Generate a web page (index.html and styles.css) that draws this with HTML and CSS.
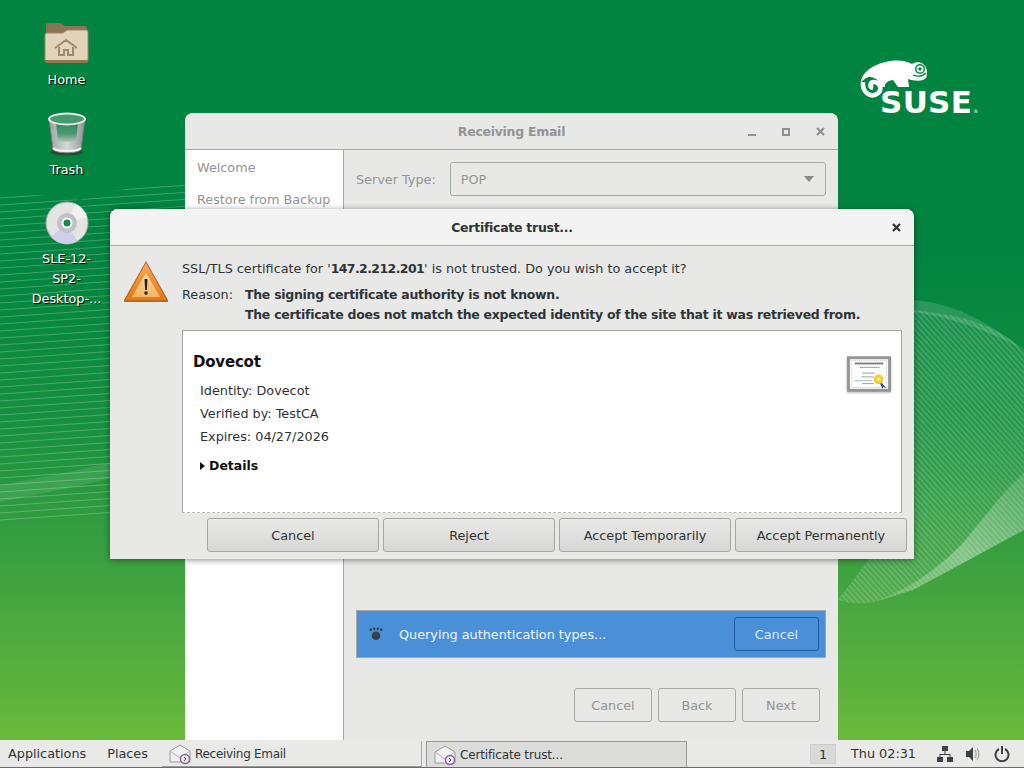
FILE: index.html
```html
<!DOCTYPE html>
<html lang="en">
<head>
<meta charset="utf-8">
<title>Certificate trust</title>
<link rel="stylesheet" href="styles.css">
</head>
<body>
<div class="desktop">
  <svg class="waves" width="1024" height="740" viewBox="0 0 1024 740" fill="none">
    <defs>
      <pattern id="stripes-right" width="4" height="4" patternUnits="userSpaceOnUse" patternTransform="rotate(48)">
        <rect width="4" height="1.300" fill="#fff" fill-opacity=".2"/>
      </pattern>
      <linearGradient id="band-right" x1="1" y1="0" x2="0" y2="1">
        <stop offset="0" stop-color="#fff" stop-opacity=".12"/>
        <stop offset=".5" stop-color="#fff" stop-opacity=".32"/>
        <stop offset="1" stop-color="#fff" stop-opacity=".1"/>
      </linearGradient>
      <clipPath id="left-shape"><path d="M0 195C30 193 60 197 80 200C110 190 150 184 190 182V510L0 525Z"/></clipPath>
    </defs>
    <g clip-path="url(#left-shape)">
      <path class="stripe-lines" d="M0 198l190-13M0 205l190-13M0 212l190-13M0 219l190-13M0 226l190-13M0 233l190-13M0 240l190-13M0 247l190-13M0 254l190-13M0 261l190-13M0 268l190-13M0 275l190-13M0 282l190-13M0 289l190-13M0 296l190-13M0 303l190-13M0 310l190-13M0 317l190-13M0 324l190-13M0 331l190-13M0 338l190-13M0 345l190-13M0 352l190-13M0 359l190-13M0 366l190-13M0 373l190-13M0 380l190-13M0 387l190-13M0 394l190-13M0 401l190-13M0 408l190-13M0 415l190-13M0 422l190-13M0 429l190-13M0 436l190-13M0 443l190-13M0 450l190-13M0 457l190-13M0 464l190-13M0 471l190-13M0 478l190-13M0 485l190-13M0 492l190-13M0 499l190-13M0 506l190-13M0 513l190-13M0 520l190-13"/>
    </g>
    <path d="M0 485C40 478 80 470 130 458V474C80 486 40 494 0 502Z" fill="#fff" fill-opacity=".1"/>
    <path d="M838 600C860 608 885 600 913 590L963 563L1024 530V350C1000 330 985 325 963 318C945 314 930 312 914 310V500Z" fill="#fff" fill-opacity=".07"/>
    <path d="M838 600C860 608 885 600 913 590L963 563L1024 530V350C1000 330 985 325 963 318C945 314 930 312 914 310V500Z" fill="url(#stripes-right)"/>
    <path d="M914 300C945 303 975 312 1024 350C985 328 950 318 914 312Z" fill="#fff" fill-opacity=".14"/>
    <path d="M863 605C885 600 900 592 913 590L963 563L1024 530V473C1005 490 990 510 963 543C935 572 900 595 863 605Z" fill="url(#band-right)"/>
  </svg>

  <div class="desk-icon desk-home">
    <svg width="46" height="42" viewBox="0 0 46 42">
      <path d="M2 3a2 2 0 0 1 2-2h13l4 3h20a2 2 0 0 1 2 2v10H2z" fill="#8b7356"/>
      <path d="M1 13a2 2 0 0 1 2-2h16l4-3h19a2 2 0 0 1 2 2v28a2 2 0 0 1-2 2H3a2 2 0 0 1-2-2z" fill="#e4d3bb" stroke="#a08a6c"/>
      <path d="M1 38h43v1a2 2 0 0 1-2 2H3a2 2 0 0 1-2-2z" fill="#8d7757"/>
      <path d="M11 26l11-8 11 8M15 25v8h5v-5h4v5h5v-8" fill="none" stroke="#a08a6c" stroke-width="2"/>
    </svg>
    <span class="desk-label">Home</span>
  </div>
  <div class="desk-icon desk-trash">
    <svg width="40" height="44" viewBox="0 0 40 44">
      <defs>
        <linearGradient id="bin" x1="0" y1="0" x2="1" y2="0"><stop offset="0" stop-color="#9ea3a0"/><stop offset=".5" stop-color="#d6dad7"/><stop offset="1" stop-color="#8f9491"/></linearGradient>
        <linearGradient id="bin-in" x1="0" y1="0" x2="0" y2="1"><stop offset="0" stop-color="#2f8a5c"/><stop offset=".6" stop-color="#4f9a74"/><stop offset="1" stop-color="#b9c4be"/></linearGradient>
      </defs>
      <ellipse cx="20" cy="40" rx="16" ry="3.500" fill="#274a36"/>
      <path d="M2 6l4 31c1 5 27 5 28 0l4-31z" fill="url(#bin)" stroke="#7d827f"/>
      <path d="M9 11h22l-2 19H11z" fill="url(#bin-in)"/>
      <path d="M6 36c4 4 24 4 28 0" fill="none" stroke="#f2f2f2" stroke-width="2"/>
      <ellipse cx="20" cy="7" rx="18" ry="5.500" fill="#459a70" stroke="#e4e6e4" stroke-width="2"/>
    </svg>
    <span class="desk-label">Trash</span>
  </div>
  <div class="desk-icon desk-disc">
    <svg width="44" height="44" viewBox="0 0 44 44">
      <circle cx="22" cy="22" r="21" fill="#e4e4e2" stroke="#a8a8aa"/>
      <path d="M22 22L6 36A21 21 0 0 0 32 40z" fill="#cfcfe6"/>
      <path d="M22 22L42 16A21 21 0 0 0 30 3z" fill="#f1f1ef"/>
      <circle cx="22" cy="22" r="10" fill="#c0c0cc"/>
      <circle cx="22" cy="22" r="5.500" fill="#fff"/>
      <circle cx="22" cy="22" r="3.500" fill="#1a8a4c"/>
    </svg>
    <span class="desk-label">SLE-12-<br>SP2-<br>Desktop-...</span>
  </div>

  <svg class="suse-logo" width="70" height="44" viewBox="0 0 70 44" aria-hidden="true">
    <path d="M1 24C2 12 20 2.500 37 2.500C43 2.500 48 4 52 6C55 4 60 3.500 63 6C67 9 68 15 66 20C62 24 54 23 48 21L49 29H38L33 22C28 22 24 26 25 29H21C20 22 12 17 6 20L1 24Z" fill="#fff"/>
    <path d="M3 24C2 34 10 40 17 36C23 32 20 24 14 24C10 24 9 29 13 30" fill="none" stroke="#fff" stroke-width="4.500"/>
    <circle cx="60" cy="11" r="5" fill="#00843f"/><circle cx="60" cy="11" r="3.500" fill="#fff"/><circle cx="60" cy="11" r="1.700" fill="#00843f"/>
    <path d="M53 17C58 19 63 18 66 15" fill="none" stroke="#00843f" stroke-width="1.300"/>
  </svg>
  <div class="suse-word">SUSE<span class="suse-mark">®</span></div>

  <section class="win win-back">
    <header class="titlebar back-title">
      <span class="title-text">Receiving Email</span>
      <span class="wm-btns">
        <i class="wm-min"></i><i class="wm-max"></i>
        <svg width="9" height="9" viewBox="0 0 9 9"><path d="M1 1l7 7M8 1L1 8" stroke="#8f8f8f" stroke-width="2.200"/></svg>
      </span>
    </header>
    <div class="back-body">
      <nav class="side">
        <div class="side-item">Welcome</div>
        <div class="side-item">Restore from Backup</div>
      </nav>
      <div class="back-main">
        <div class="server-row">
          <span class="muted-label">Server Type:</span>
          <div class="select"><span>POP</span><i class="caret"></i></div>
        </div>
        <div class="spacer"></div>
        <div class="infobar">
          <svg width="14" height="14" viewBox="0 0 16 16"><circle cx="8" cy="10" r="5" fill="#3a3f46"/><circle cx="2" cy="3" r="1.500" fill="#3a3f46"/><circle cx="6" cy="2" r="1.500" fill="#3a3f46"/><circle cx="10" cy="2" r="1.500" fill="#3a3f46"/><circle cx="14" cy="3" r="1.500" fill="#3a3f46"/></svg>
          <span class="info-text">Querying authentication types...</span>
          <button class="info-btn">Cancel</button>
        </div>
        <div class="back-actions">
          <button class="btn-dim">Cancel</button>
          <button class="btn-dim">Back</button>
          <button class="btn-dim">Next</button>
        </div>
      </div>
    </div>
  </section>

  <section class="win win-front">
    <header class="titlebar front-title">
      <span class="title-text">Certificate trust...</span>
      <svg class="front-close" width="9" height="9" viewBox="0 0 9 9"><path d="M1 1l7 7M8 1L1 8" stroke="#2e3436" stroke-width="2.200"/></svg>
    </header>
    <div class="front-body">
      <div class="msg-row">
        <svg class="warn" width="46" height="46" viewBox="0 0 46 46">
          <defs><linearGradient id="wg" x1="0" y1="0" x2="0" y2="1"><stop offset="0" stop-color="#f7a95a"/><stop offset="1" stop-color="#e8780e"/></linearGradient>
          <linearGradient id="wi" x1="0" y1="0" x2="0" y2="1"><stop offset="0" stop-color="#fbd9a8"/><stop offset="1" stop-color="#f7b562"/></linearGradient></defs>
          <path d="M23 2L45 41c.5 1.500 0 2-1.500 2h-41C1 43 .5 42.500 1 41z" fill="#b86a22"/>
          <path d="M23 4L43.500 41h-41z" fill="url(#wg)"/>
          <path d="M23 14L37 38H9z" fill="url(#wi)"/>
          <path d="M21.500 20h3l-.7 11h-1.600z" fill="#222"/><circle cx="23" cy="34" r="1.700" fill="#222"/>
        </svg>
        <div class="msg-text">
          <p class="msg-line">SSL/TLS certificate for '<b class="strong ip">147.2.212.201</b>' is not trusted. Do you wish to accept it?</p>
          <div class="reason">
            <span class="reason-label">Reason:</span>
            <b class="strong">The signing certificate authority is not known.<br>The certificate does not match the expected identity of the site that it was retrieved from.</b>
          </div>
        </div>
      </div>
      <div class="cert-box">
        <div class="cert-info">
          <h2 class="cert-name">Dovecot</h2>
          <p class="cert-field">Identity: Dovecot</p>
          <p class="cert-field">Verified by: TestCA</p>
          <p class="cert-field">Expires: 04/27/2026</p>
          <p class="details"><i class="arrow"></i>Details</p>
        </div>
        <svg class="cert-icon" width="44" height="37" viewBox="0 0 46 38">
          <rect x="1.500" y="1.500" width="43" height="34" fill="#fdfdfd" stroke="#949494" stroke-width="3"/>
          <rect x="4.500" y="4.500" width="37" height="28" fill="#fff" stroke="#c6c6c6" stroke-dasharray="1 1"/>
          <path d="M8 7.500h30" stroke="#808080" stroke-width="2"/><path d="M13 11.500h21M16 17.500h13M15 21.500h13M16 28.500h12" stroke="#999"/><path d="M8 25.500h18" stroke="#9db4d8"/>
          <path d="M35 26l6 7-3-1-1 2-3-7z" fill="#2f568f"/>
          <circle cx="33" cy="24" r="5" fill="#f4c92e"/><circle cx="33" cy="24" r="2.200" fill="#fbe68a"/>
        </svg>
      </div>
      <div class="front-actions">
        <button class="btn">Cancel</button>
        <button class="btn">Reject</button>
        <button class="btn">Accept Temporarily</button>
        <button class="btn">Accept Permanently</button>
      </div>
    </div>
  </section>
</div>

<footer class="panel">
  <span class="menu-item">Applications</span>
  <span class="menu-item">Places</span>
  <div class="task task-idle">
    <svg class="mail" width="24" height="22" viewBox="0 0 24 22"><path d="M1 8l10-6 10 6v11H1z" fill="#f1f1f1" stroke="#9a9a9a"/><path d="M1 8l10 7 10-7" fill="none" stroke="#b5b5b5"/><circle cx="16" cy="16" r="4.500" fill="#eee" stroke="#8e5fa0" stroke-width="1.500"/><path d="M15 14l2 2-2 2" fill="none" stroke="#555"/></svg>
    <span class="task-text">Receiving Email</span>
  </div>
  <div class="task task-active">
    <svg class="mail" width="24" height="22" viewBox="0 0 24 22"><path d="M1 8l10-6 10 6v11H1z" fill="#f1f1f1" stroke="#9a9a9a"/><path d="M1 8l10 7 10-7" fill="none" stroke="#b5b5b5"/><circle cx="16" cy="16" r="4.500" fill="#eee" stroke="#8e5fa0" stroke-width="1.500"/><path d="M15 14l2 2-2 2" fill="none" stroke="#555"/></svg>
    <span class="task-text task-text-wide">Certificate trust...</span>
  </div>
  <div class="tray">
    <span class="workspace">1</span>
    <span class="clock">Thu 02:31</span>
    <svg class="tray-net" width="16" height="16" viewBox="0 0 16 16" fill="#3c4145"><rect x="5" y="0" width="6" height="5"/><rect x="0" y="11" width="6" height="5"/><rect x="10" y="11" width="6" height="5"/><path d="M7.500 5h1v3H13.500v3h-1V9h-9v2h-1V8h5z"/></svg>
    <svg class="tray-vol" width="16" height="16" viewBox="0 0 16 16"><path d="M1 5h3l4-4v14l-4-4H1z" fill="#3c4145"/><path d="M10 4c1.500 2 1.500 6 0 8M12 2.500c2.500 3 2.500 8 0 11" fill="none" stroke="#a5a8aa" stroke-width="1.300"/></svg>
    <svg class="tray-power" width="16" height="16" viewBox="0 0 16 16" fill="none" stroke="#3c4145" stroke-width="2"><path d="M5 3a6.500 6.500 0 1 0 6 0"/><path d="M8 0v8"/></svg>
  </div>
</footer>
</body>
</html>
```
FILE: styles.css
```css
* { box-sizing: border-box; }
html, body { margin: 0; height: 100%; }
body {
  width: 1024px;
  height: 768px;
  overflow: hidden;
  display: flex;
  flex-direction: column;
  font-family: "DejaVu Sans", sans-serif;
  font-size: 12.8px;
  color: #2e3436;
}
.desktop {
  position: relative;
  height: 740px;
  background: linear-gradient(180deg, #00843f 0, #00843f 250px, #16903f 420px, #3ea240 570px, #6ab93c 740px);
}
.waves { position: absolute; left: 0; top: 0; }
.stripe-lines { stroke: rgba(255,255,255,.24); stroke-width: 1; }

.desk-icon {
  position: absolute;
  left: 24px;
  width: 85px;
  display: flex;
  flex-direction: column;
  align-items: center;
  color: #fff;
  text-align: center;
  line-height: 20px;
}
.desk-home { top: 22px; }
.desk-trash { top: 112px; }
.desk-disc { top: 201px; }
.desk-label { margin-top: 4px; text-shadow: 1px 1px 1px #000; }
.desk-home .desk-label { margin-top: 6px; }

.suse-logo { position: absolute; left: 860px; top: 58px; }
.suse-word {
  position: absolute;
  left: 880px;
  top: 84px;
  font: 700 31px/36px "DejaVu Sans", sans-serif;
  letter-spacing: .3px;
  color: #fff;
  white-space: nowrap;
}
.suse-mark { font-size: 5px; font-weight: 400; margin-left: 1px; }

.win { position: absolute; display: flex; flex-direction: column; }
.win-back {
  left: 185px;
  top: 113px;
  width: 653px;
  height: 627px;
  background: #e8e8e7;
  border-radius: 8px 8px 0 0;
  color: #949494;
}
.titlebar {
  position: relative;
  flex: none;
  display: flex;
  align-items: center;
  justify-content: center;
  font-size: 12.500px;
  font-weight: 700;
  letter-spacing: -.28px;
  border-bottom: 1px solid #a8a8a6;
}
.strong { font-size: 12.500px; font-weight: 700; letter-spacing: -.28px; }
.ip { letter-spacing: -.6px; }
.back-title { height: 37px; background: #e8e8e7; border-radius: 8px 8px 0 0; }
.wm-btns {
  position: absolute;
  right: 13px;
  top: 14px;
  display: flex;
  align-items: flex-end;
  gap: 26px;
  height: 9px;
}
.wm-min { width: 8px; height: 2px; background: #8f8f8f; }
.wm-max { width: 8px; height: 8px; border: 2px solid #8f8f8f; }
.back-body { flex: 1; display: flex; min-height: 0; }
.side { width: 159px; background: #fff; border-right: 1px solid #a8a8a6; padding-top: 1px; }
.side-item { height: 32px; padding: 8px 12px 0; line-height: 17px; white-space: nowrap; }
.back-main { flex: 1; display: flex; flex-direction: column; padding: 12px 12px 0; min-width: 0; }
.server-row { display: flex; align-items: center; gap: 14px; }
.select {
  flex: 1;
  height: 34px;
  display: flex;
  align-items: center;
  justify-content: space-between;
  padding: 0 11px 0 10px;
  border: 1px solid #aaa;
  border-radius: 3px;
}
.caret { border: 5px solid transparent; border-top: 6px solid #888; border-bottom: 0; }
.spacer { flex: 1; }
.infobar {
  height: 48px;
  display: flex;
  align-items: center;
  background: #4a90d9;
  border: 1px solid #a5a5a5;
  color: #f0f5fb;
  padding: 0 6px 0 12px;
}
.info-text { flex: 1; margin-left: 16px; }
.info-btn {
  width: 85px;
  height: 34px;
  font: inherit;
  color: #dce8f6;
  background: #4a90d9;
  border: 1px solid #1f5c9c;
  border-radius: 3px;
}
.back-actions { display: flex; justify-content: flex-end; gap: 6px; margin: 30px 6px 18px 0; }
.btn-dim {
  width: 78px;
  height: 34px;
  font: inherit;
  color: #939393;
  background: transparent;
  border: 1px solid #a8a8a8;
  border-radius: 3px;
}

.win-front {
  left: 110px;
  top: 209px;
  width: 804px;
  height: 350px;
  background: #e8e8e7;
  border-radius: 8px 8px 0 0;
  box-shadow: 0 1px 6px rgba(0,0,0,.45);
}
.front-title { height: 37px; background: #f3f3f3; border-radius: 8px 8px 0 0; }
.front-close { position: absolute; right: 13px; top: 14px; }
.front-body { flex: 1; display: flex; flex-direction: column; min-height: 0; }
.msg-row { display: flex; height: 84px; padding: 13px 0 0 13px; }
.warn { flex: none; }
.msg-text { margin-left: 13px; }
.msg-line { margin: 0; line-height: 20px; }
.reason { display: flex; margin-top: 6px; line-height: 20px; }
.reason-label { width: 63px; }
.cert-box {
  margin: 0 12px 0 72px;
  height: 183px;
  display: flex;
  justify-content: space-between;
  background: #fff;
  border: 1px solid #a5a5a3;
  border-bottom: 1px dashed #bbb;
  padding: 20px 10px 0;
}
.cert-name { margin: 0 0 8px; font-size: 15px; font-weight: 700; letter-spacing: -.2px; line-height: 22px; color: #111; }
.cert-field { margin: 0 0 3px 7px; line-height: 20px; }
.details { margin: 9px 0 0 7px; line-height: 20px; font-size: 12.500px; font-weight: 700; color: #111; display: flex; align-items: center; gap: 4px; }
.arrow { border: 4.500px solid transparent; border-left: 5px solid #111; border-right: 0; }
.cert-icon { margin-top: 5px; filter: drop-shadow(0 1px 1px rgba(0,0,0,.3)); }
.front-actions { display: flex; gap: 4px; margin: 5px 7px 0 97px; }
.btn {
  flex: 1;
  height: 34px;
  font: inherit;
  color: #2e3436;
  background: linear-gradient(180deg, #e9e9e8, #d6d6d4);
  border: 1px solid #a5a5a3;
  border-radius: 3px;
  padding: 0;
}

.panel {
  height: 28px;
  flex: none;
  position: relative;
  display: flex;
  align-items: stretch;
  background: #e9e9e8;
  border-bottom: 1px solid #6a6a6a;
  padding-left: 8px;
}
.menu-item { align-self: center; margin-right: 21px; }
.task {
  position: absolute;
  top: 1px;
  height: 26px;
  display: flex;
  align-items: center;
  gap: 2px;
  padding-left: 7px;
}
.task-text { font-size: 12px; letter-spacing: -.3px; }
.task-text-wide { letter-spacing: -.15px; }
.task-idle { left: 162px; width: 260px; border-bottom: 1px solid #9a9a9a; border-right: 1px solid #a8a8a8; }
.task-active { left: 426px; width: 261px; background: #dcdcdb; border: 1px solid #9a9a9a; border-bottom: 0; padding-left: 7px; }
.tray { margin-left: auto; display: flex; align-items: center; }
.workspace {
  width: 26px;
  height: 20px;
  text-align: center;
  line-height: 20px;
  background: #d9d9d8;
  border: 1px solid #cfcfcf;
  margin-right: 15px;
}
.clock { margin-right: 21px; }
.tray-net { margin-right: 12px; }
.tray-vol { margin-right: 13px; }
.tray-power { margin-right: 14px; }
```
